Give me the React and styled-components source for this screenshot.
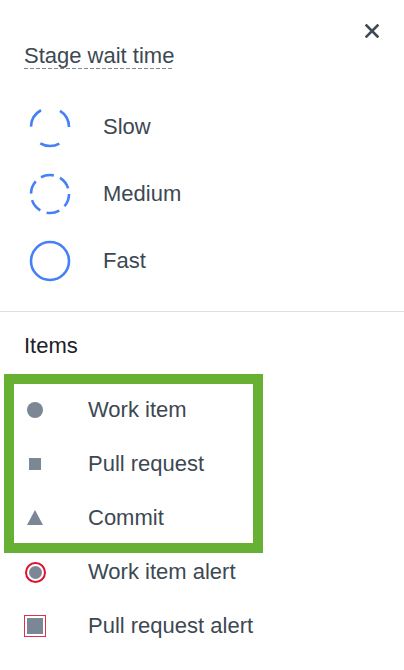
import React from "react";
import styled, { createGlobalStyle } from "styled-components";

const GlobalStyle = createGlobalStyle`
  body {
    margin: 0;
    background: #ffffff;
  }
`;

const Panel = styled.aside`
  width: 404px;
  min-height: 670px;
  background: #ffffff;
  font-family: "Liberation Sans", Arial, sans-serif;
  color: #3d4852;
`;

const Header = styled.div`
  display: flex;
  justify-content: flex-end;
  padding: 22px 23px 0 24px;
`;

const CloseButton = styled.button`
  width: 18px;
  height: 18px;
  padding: 0;
  border: 0;
  background: none;
  display: flex;
  align-items: center;
  justify-content: center;
  color: #3e4a55;
  cursor: pointer;
`;

const Section = styled.section`
  padding: 0 24px;
`;

const Title = styled.h2`
  margin: 3px 0 0;
  font-size: 22px;
  line-height: 26px;
  font-weight: 400;
  color: #3d4852;
`;

const Dashed = styled.span`
  padding-bottom: 1px;
  background-image: linear-gradient(to right, #7d8892 4px, transparent 4px);
  background-size: 6px 1px;
  background-repeat: repeat-x;
  background-position: 0 100%;
`;

const SpeedList = styled.ul`
  list-style: none;
  margin: 36px 0 0;
  padding: 0;
  display: flex;
  flex-direction: column;
  gap: 23px;
`;

const SpeedRow = styled.li`
  display: flex;
  align-items: center;
  height: 44px;
  gap: 31px;
  padding-left: 4px;
  font-size: 22px;
  line-height: 26px;
`;

const Divider = styled.hr`
  margin: 28px 0 0;
  border: 0;
  border-top: 1px solid #dfdfdf;
`;

const Heading = styled.h3`
  margin: 21px 0 0;
  font-size: 22px;
  line-height: 26px;
  font-weight: 400;
  color: #1c2128;
`;

const ItemList = styled.ul`
  position: relative;
  list-style: none;
  margin: 24px 0 0;
  padding: 0;
`;

const ItemRow = styled.li`
  display: flex;
  align-items: center;
  height: 54px;
  gap: 42px;
  font-size: 22px;
  line-height: 26px;
`;

const IconSlot = styled.span`
  width: 22px;
  height: 22px;
  display: flex;
  align-items: center;
  justify-content: center;
  flex-shrink: 0;
`;

const Dot = styled.span`
  width: ${(p) => p.$size}px;
  height: ${(p) => p.$size}px;
  border-radius: 50%;
  background: #7b8794;
`;

const Square = styled.span`
  width: ${(p) => p.$size}px;
  height: ${(p) => p.$size}px;
  background: #7b8794;
`;

const Triangle = styled.span`
  width: 0;
  height: 0;
  border-left: 8.5px solid transparent;
  border-right: 8.5px solid transparent;
  border-bottom: 15px solid #7b8794;
  margin-top: -2px;
`;

const AlertRing = styled.span`
  width: 21px;
  height: 21px;
  box-sizing: border-box;
  border-radius: 50%;
  border: 2px solid #df1130;
  display: flex;
  align-items: center;
  justify-content: center;
`;

const AlertBox = styled.span`
  width: 22px;
  height: 22px;
  box-sizing: border-box;
  border: 1.5px solid #e0304f;
  display: flex;
  align-items: center;
  justify-content: center;
`;

const Highlight = styled.span`
  position: absolute;
  top: -9px;
  left: -20px;
  width: 259px;
  height: 179px;
  box-sizing: border-box;
  border: 10px solid #66b133;
  pointer-events: none;
`;

const speeds = [
  { label: "Slow", dash: "19.9 19.9", offset: 19.9 },
  { label: "Medium", dash: "13.27 6.63", offset: 0 },
  { label: "Fast", dash: null, offset: 0 },
];

const SpeedIcon = ({ dash, offset }) => (
  <svg width="44" height="44" viewBox="0 0 44 44">
    <circle
      cx="22"
      cy="22"
      r="19"
      fill="none"
      stroke="#4680f6"
      strokeWidth="2.6"
      strokeDasharray={dash || undefined}
      strokeDashoffset={offset}
    />
  </svg>
);

const CloseIcon = () => (
  <svg width="14" height="14" viewBox="0 0 14 14">
    <path d="M1.5 1.5 L12.5 12.5 M12.5 1.5 L1.5 12.5" stroke="currentColor" strokeWidth="2.6" strokeLinecap="square" />
  </svg>
);

const items = [
  { label: "Work item", icon: <Dot $size={16} /> },
  { label: "Pull request", icon: <Square $size={12} /> },
  { label: "Commit", icon: <Triangle /> },
  {
    label: "Work item alert",
    icon: (
      <AlertRing>
        <Dot $size={13} />
      </AlertRing>
    ),
  },
  {
    label: "Pull request alert",
    icon: (
      <AlertBox>
        <Square $size={16} />
      </AlertBox>
    ),
  },
];

export default function App() {
  return (
    <>
      <GlobalStyle />
      <Panel>
        <Header>
          <CloseButton aria-label="Close">
            <CloseIcon />
          </CloseButton>
        </Header>

        <Section>
          <Title>
            <Dashed>Stage wait time</Dashed>
          </Title>
          <SpeedList>
            {speeds.map((s) => (
              <SpeedRow key={s.label}>
                <SpeedIcon dash={s.dash} offset={s.offset} />
                {s.label}
              </SpeedRow>
            ))}
          </SpeedList>
        </Section>

        <Divider />

        <Section>
          <Heading>Items</Heading>
          <ItemList>
            {items.map((it) => (
              <ItemRow key={it.label}>
                <IconSlot>{it.icon}</IconSlot>
                {it.label}
              </ItemRow>
            ))}
            <Highlight />
          </ItemList>
        </Section>
      </Panel>
    </>
  );
}
